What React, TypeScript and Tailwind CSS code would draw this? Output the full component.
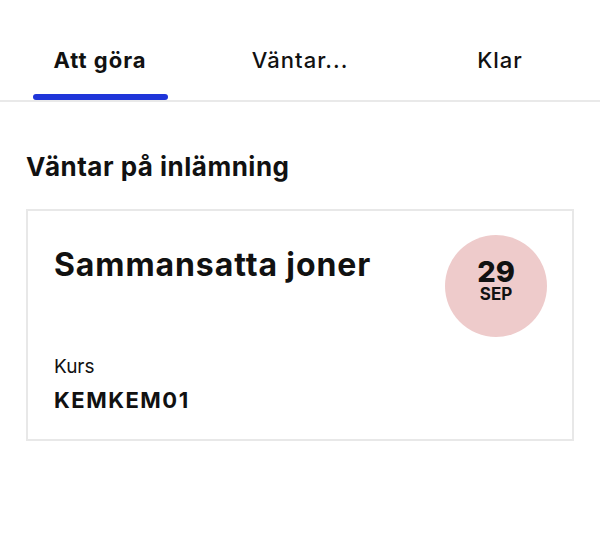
import React from "react";

export default function App() {
  const tabs = ["Att göra", "Väntar...", "Klar"];
  return (
    <div className="w-[600px] h-[550px] bg-white text-[#111] overflow-hidden" style={{ fontFamily: "Inter, 'Noto Sans', sans-serif" }}>
      <div className="flex border-b-2 border-[#e9e9e9] pt-[45px]">
        {tabs.map((t, i) => (
          <div key={t} className="w-[200px] flex flex-col items-center">
            <div className={`text-[22px] leading-[30px] ${i === 0 ? "font-bold" : "font-medium"} tracking-[1px]`}>{t}</div>
            <div className={`mt-[19px] h-[6px] w-[135px] rounded-full ${i === 0 ? "bg-[#1f35d9]" : "bg-transparent"}`} />
          </div>
        ))}
      </div>
      <div className="px-[26px]">
        <h2 className="mt-[48px] text-[26px] leading-[34px] font-bold tracking-[0.5px]">Väntar på inlämning</h2>
        <div className="mt-[25px] border-2 border-[#e8e8e8] h-[232px] px-[26px] pt-[24px] flex flex-col">
          <div className="flex justify-between items-start">
            <div className="mt-[10px] text-[32px] leading-[40px] font-bold tracking-[0.9px]">Sammansatta joner</div>
            <div className="w-[102px] h-[102px] rounded-full bg-[#eecbcb] flex flex-col items-center justify-center pb-[9px] mr-[-1px]">
              <div className="text-[29px] leading-[24px] font-extrabold">29</div>
              <div className="mt-[2px] text-[17px] leading-[17px] font-bold">SEP</div>
            </div>
          </div>
          <div className="mt-[18px] text-[19px] leading-[24px]">Kurs</div>
          <div className="mt-[7px] text-[22px] leading-[28px] font-bold tracking-[1.5px]">KEMKEM01</div>
        </div>
      </div>
    </div>
  );
}
